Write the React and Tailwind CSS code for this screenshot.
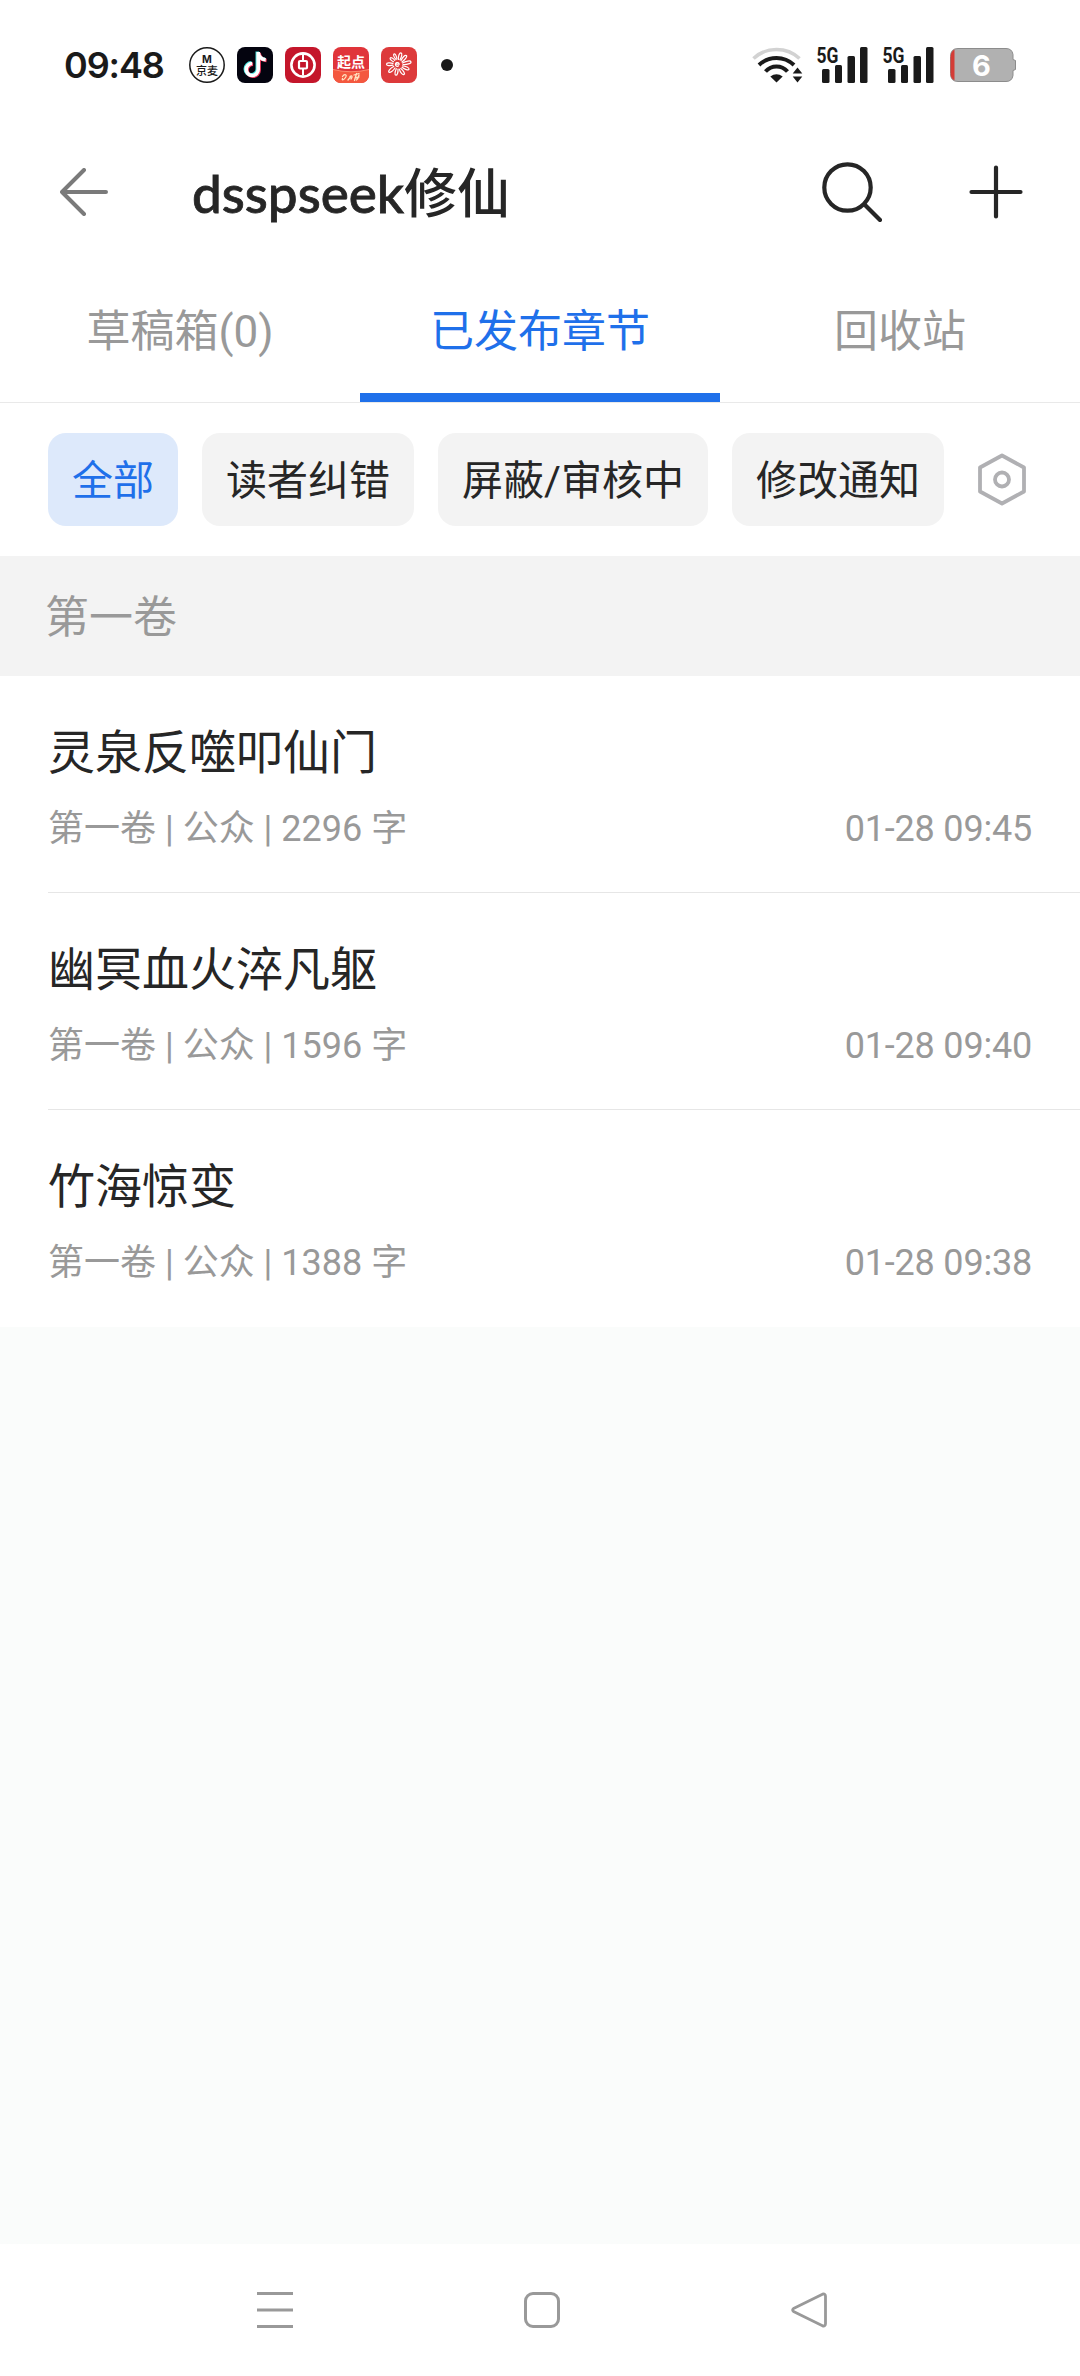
const tabs = [
  { label: "草稿箱(0)", active: false },
  { label: "已发布章节", active: true },
  { label: "回收站", active: false },
]

const filters = [
  { label: "全部", active: true },
  { label: "读者纠错", active: false },
  { label: "屏蔽/审核中", active: false },
  { label: "修改通知", active: false },
]

const chapters = [
  { title: "灵泉反噬叩仙门", volume: "第一卷", type: "公众", words: 2296, time: "01-28 09:45" },
  { title: "幽冥血火淬凡躯", volume: "第一卷", type: "公众", words: 1596, time: "01-28 09:40" },
  { title: "竹海惊变", volume: "第一卷", type: "公众", words: 1388, time: "01-28 09:38" },
]

const JingmaiIcon = () => (
  <svg className="size-9" viewBox="0 0 36 36">
    <circle cx="18" cy="18" r="17.2" fill="#fff" stroke="#1a1a1a" strokeWidth="1.5" />
    <text x="18" y="16" textAnchor="middle" fontSize="10.5" fontWeight="700" fontFamily="Inter, sans-serif" fill="#1a1a1a">M</text>
    <text x="18" y="28" textAnchor="middle" fontSize="11" fontWeight="500" fontFamily="'Noto Sans CJK SC', sans-serif" fill="#1a1a1a">京麦</text>
  </svg>
)

const NOTE = "M21.2 5v17.500a6 6 0 1 1-6-6M21.200 5.500c.6 4.500 3 6.800 7.500 7.300"

const DouyinIcon = () => (
  <svg className="size-9" viewBox="0 0 36 36" fill="none" strokeWidth="3.6">
    <rect width="36" height="36" rx="8" fill="#04040f" />
    <path d={NOTE} stroke="#3fe0dc" transform="translate(-.9 -.6)" />
    <path d={NOTE} stroke="#f03a5f" transform="translate(.9 .7)" />
    <path d={NOTE} stroke="#fff" />
  </svg>
)

const BankIcon = () => (
  <svg className="size-9" viewBox="0 0 36 36" fill="none" stroke="#fff">
    <rect width="36" height="36" rx="8" fill="#c4162b" stroke="none" />
    <circle cx="18" cy="18" r="11.6" strokeWidth="2.6" />
    <rect x="14" y="14" width="8" height="7.5" rx="1" strokeWidth="2.2" />
    <path d="M18 7v7M18 21.500v7" strokeWidth="2" />
  </svg>
)

const QidianIcon = () => (
  <svg className="size-9" viewBox="0 0 36 36">
    <rect width="36" height="36" rx="8" fill="#e0343a" />
    <path d="M0 22.500q18 4.500 36 0V28a8 8 0 0 1-8 8H8a8 8 0 0 1-8-8z" fill="#f4583f" />
    <path d="M0 22.500q18 4.500 36 0" fill="none" stroke="#ff9a7c" strokeWidth=".8" />
    <text x="18" y="19.5" textAnchor="middle" fontSize="14" fontWeight="700" fontFamily="'Noto Sans CJK SC', sans-serif" fill="#fff">起点</text>
    <path d="M9.500 29.500c2-3 5-2 3 1s-4 3-3 1M15 33l2.500-3M17 29.500c2-1.500 3 0 1 2.500M21 28l5-1.500M23.500 26.500l-2 7M22 31l4-1M26 28c-.5 2-1 4-2.500 5" fill="none" stroke="#ffe3c2" strokeWidth="1.3" strokeLinecap="round" />
  </svg>
)

const FlowerIcon = () => (
  <svg className="size-9" viewBox="0 0 36 36" fill="none" stroke="#fff" strokeWidth="1.2" strokeLinecap="round">
    <rect width="36" height="36" rx="8" fill="#dd3a3b" stroke="none" />
    <path d="M14.800 17.200h3.400a1.900 1.900 0 1 0-.6 1.600" />
    <path d="M15 12.500C13 10 12 8 13 7s2.500 2 3 5" />
    <path d="M17.500 12.500C17 9 18.500 5.500 20 5.800s.8 4-1 7" />
    <path d="M20 13.500c1.500-3 4-6 5.300-5s-1 4-4.300 6.500" />
    <path d="M21.500 16c3-1.800 8-3 8.500-1.200s-4.500 3-8 2.700" />
    <path d="M21.500 18.800c3 .2 7 2 6.500 3.500s-4.500 0-7-2" />
    <path d="M19.800 21.500c2.500 2 4.500 5 3.200 6s-3.800-2-4.700-5.300" />
    <path d="M17 22.200c.3 3-.8 6.300-2.200 6s-.8-3.800.5-6.500" />
    <path d="M14 21c-1.800 2.800-4.800 5.200-6 4.200s1.300-4 4.700-5.700" />
    <path d="M12 18.200c-3 .8-6.500.5-6.500-1s3.500-1.700 6.500-.8" />
    <path d="M12.500 14.700c-2-1-4-2.700-3.300-3.700s3 .2 4.600 2.300" />
  </svg>
)

const WifiIcon = () => (
  <svg className="h-9 w-[51px]" viewBox="0 0 51 36" fill="none" strokeWidth="4">
    <path d="M1.500 11.500Q11 2.500 24.500 2.500T47.500 11.500" stroke="#d2d2d2" strokeWidth="3.6" />
    <path d="M7 18Q14.500 11 24.500 11T42 18" stroke="#1a1a1a" />
    <path d="M13.500 24.500Q18 19.500 24.500 19.500T35.500 24.500" stroke="#1a1a1a" />
    <path d="M24.500 35.500l-6.200-6q6.200-4.500 12.400 0z" fill="#1a1a1a" />
    <path d="M45.500 20.500l4.800 6.100h-9.600zM45.500 35.500l4.800-6.100h-9.600z" fill="#1a1a1a" />
  </svg>
)

const SignalIcon = () => (
  <svg className="h-[54px] w-[52px]" viewBox="0 -8 52 54" fill="#1a1a1a">
    <text x="0.5" y="16.5" fontSize="22" fontWeight="700" fontFamily="Roboto, sans-serif" textLength="22" lengthAdjust="spacingAndGlyphs">5G</text>
    <rect x="6" y="23" width="7.5" height="14" rx="1.5" />
    <rect x="19" y="19" width="7" height="18" rx="1.5" />
    <rect x="31.5" y="10" width="7.5" height="27" rx="1.5" />
    <rect x="44" y="1" width="7.5" height="36" rx="1.5" />
  </svg>
)

const BatteryIcon = () => (
  <svg className="h-[34px] w-[66px]" viewBox="0 0 66 34">
    <path d="M8 .5h48q6 0 7 6v5l2.500 1v9l-2.500 1v5q-1 6-7 6H8q-7.500 0-7.500-8V8.500Q.5.5 8 .5z" fill="#b1b1b1" stroke="#8c8c8c" />
    <path d="M4.500 1.500Q.5 3.500.5 9v16q0 5.500 4 7.500z" fill="#d43c36" />
    <text x="31.5" y="27.5" textAnchor="middle" fontSize="29" fontWeight="700" fontFamily="Inter, sans-serif" fill="#fff">6</text>
  </svg>
)

const StatusBar = () => (
  <div className="flex h-32 items-center px-16 pt-px">
    <span className="w-[125px] font-[Inter] text-[36px] font-semibold leading-none tracking-[-1.1px] text-[#1a1a1a]">09:48</span>
    <div className="flex items-center gap-3">
      <JingmaiIcon />
      <DouyinIcon />
      <BankIcon />
      <QidianIcon />
      <FlowerIcon />
    </div>
    <span className="ml-6 size-3 rounded-full bg-[#1a1a1a]" />
    <div className="ml-auto flex items-center">
      <WifiIcon />
      <div className="ml-[13px] flex gap-[14px]">
        <SignalIcon />
        <SignalIcon />
      </div>
      <span className="ml-4">
        <BatteryIcon />
      </span>
    </div>
  </div>
)

const Header = () => (
  <header className="flex h-32 items-center pl-[60px] pr-[57px]">
    <button>
      <svg className="size-12" viewBox="0 0 48 48" fill="none" stroke="#7a7a7a" strokeWidth="4" strokeLinecap="round" strokeLinejoin="round">
        <path d="M24 2L2 24l22 22M2 24h44" />
      </svg>
    </button>
    <h1 className="ml-[84px] font-[Lato,'Noto_Sans_CJK_SC',sans-serif] text-[53px] font-medium leading-none text-[#262626]">
      <span className="[-webkit-text-stroke:0.8px_#262626]">dsspseek</span>修仙
    </h1>
    <div className="ml-auto flex items-center gap-[87px]">
      <button>
        <svg className="size-[60px]" viewBox="0 0 60 60" fill="none" stroke="#262626" strokeWidth="4.2" strokeLinecap="round">
          <circle cx="25.5" cy="25.5" r="23.2" />
          <path d="M42.500 42.500L58 58" />
        </svg>
      </button>
      <button>
        <svg className="size-[54px]" viewBox="0 0 54 54" fill="none" stroke="#262626" strokeWidth="4.2" strokeLinecap="round">
          <path d="M27 2.500v49M2.500 27h49" />
        </svg>
      </button>
    </div>
  </header>
)

const Tabs = () => (
  <nav className="grid h-[147px] grid-cols-3 border-b border-[#e9e9e9]">
    {tabs.map((tab) => (
      <button
        key={tab.label}
        className={`border-b-[9px] pt-[14px] text-[44px] leading-none ${tab.active ? "border-[#1f70ea] text-[#1f70ea]" : "border-transparent text-[#999]"}`}
      >
        {tab.label}
      </button>
    ))}
  </nav>
)

const Filters = () => (
  <div className="flex h-[153px] items-center gap-6 px-12">
    {filters.map((filter) => (
      <button
        key={filter.label}
        className={`h-[93px] rounded-[18px] px-6 pt-1 text-[41px] leading-none whitespace-nowrap ${filter.active ? "bg-[#dde9fb] text-[#1f70ea]" : "bg-[#f3f3f3] text-[#262626]"}`}
      >
        {filter.label}
      </button>
    ))}
    <svg className="mb-px ml-[10px] h-[53px] w-12 shrink-0" viewBox="0 0 48 53" fill="none" stroke="#b0b0b3" strokeWidth="3.8">
      <path d="M24 2.500l22 12v24l-22 12-22-12v-24z" strokeLinejoin="round" />
      <circle cx="24" cy="26.5" r="7" />
    </svg>
  </div>
)

const ChapterRow = ({ chapter, last }) => (
  <li className="pl-12">
    <div className={`flex h-[217px] flex-col border-b pr-12 pt-[51px] ${last ? "border-transparent" : "border-[#e6e6e6]"}`}>
      <h2 className="text-[47px] leading-[52px] text-[#262626]">{chapter.title}</h2>
      <div className="mt-[29px] flex justify-between text-[36px] leading-[42px] text-[#999]">
        <span>{chapter.volume} | {chapter.type} | {chapter.words} 字</span>
        <span className="tracking-[-0.2px]">{chapter.time}</span>
      </div>
    </div>
  </li>
)

const NavBar = () => (
  <footer className="flex h-[132px] items-center justify-between bg-white pl-[257px] pr-[253px]">
    <svg className="size-9" viewBox="0 0 36 36" stroke="#999" strokeWidth="3">
      <path d="M0 1.500h36M0 18h36M0 34.500h36" />
    </svg>
    <svg className="size-9" viewBox="0 0 36 36" fill="none" stroke="#999" strokeWidth="3">
      <rect x="1.5" y="1.5" width="33" height="33" rx="7.5" />
    </svg>
    <svg className="size-9" viewBox="0 0 36 36" fill="none" stroke="#999" strokeWidth="2.8">
      <path d="M31.500 2.200L2.500 16.500q-1.800 1.500 0 3L31.500 33.800q3 .8 3-2v-27.600q0-2.800-3-2z" strokeLinejoin="round" />
    </svg>
  </footer>
)

const App = () => {
  return (
    <div className="flex h-[2376px] w-[1080px] flex-col bg-[#fafcfb] font-[Roboto,'Noto_Sans_CJK_SC',sans-serif]">
      <div className="bg-white">
        <StatusBar />
        <Header />
        <Tabs />
        <Filters />
      </div>
      <div className="flex h-[120px] items-center bg-[#f3f3f3] px-[45px] pt-1 text-[44px] leading-none text-[#999]">第一卷</div>
      <ul className="bg-white">
        {chapters.map((chapter, index) => (
          <ChapterRow key={chapter.title} chapter={chapter} last={index === chapters.length - 1} />
        ))}
      </ul>
      <div className="flex-1" />
      <NavBar />
    </div>
  )
}

export default App
